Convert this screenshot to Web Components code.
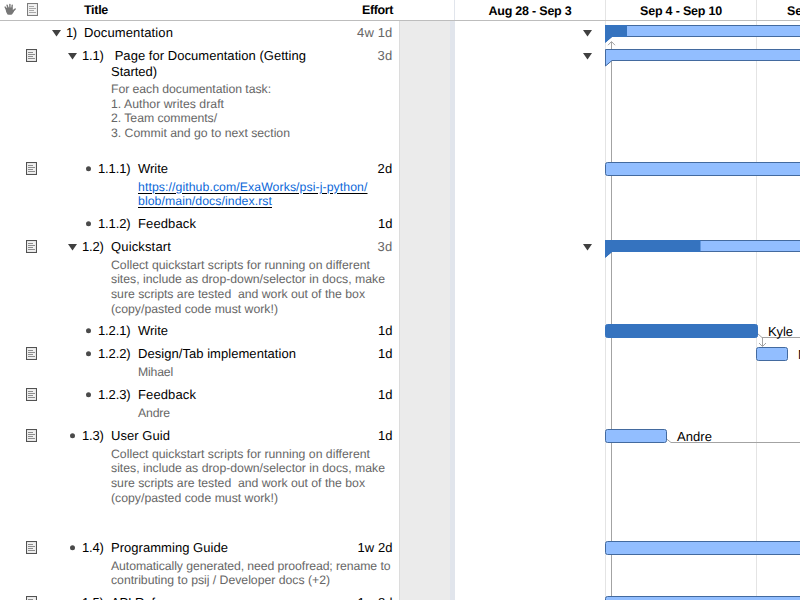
<!DOCTYPE html>
<html lang="en"><head><meta charset="utf-8"><title>Project plan</title>
<style>html,body{margin:0;height:100%;overflow:hidden;background:#fff}</style></head><body>
<plan-app></plan-app>
<script>
const define = (name, css, html, ready) => {
  const t = document.createElement('template');
  t.innerHTML = `<style>${css}</style>${html}`;
  customElements.define(name, class extends HTMLElement {
    connectedCallback() {
      if (this.shadowRoot) return;
      this.attachShadow({mode: 'open'}).append(t.content.cloneNode(true));
      if (ready) ready.call(this, this.shadowRoot);
    }
  });
};

// A single line of text, tracked so that it spans the width given in "w".
define('fit-line', ':host{display:block;white-space:pre;width:max-content}', '<slot></slot>', function () {
  const w = +this.getAttribute('w');
  if (w) {
    const now = this.getBoundingClientRect().width;
    this.style.letterSpacing = (w - now) / this.textContent.length + 'px';
  }
});

define('note-icon', ':host{display:block;width:11px;height:13px}:host([dim]){opacity:.75}svg{display:block}',
 `<svg width="11" height="13"><rect x=".5" y=".5" width="10" height="12" fill="#f0f0f0" stroke="#525252" stroke-width="1.1"/><path d="M2 3.5h5M2 5.5h7M2 7.5h5M2 9.5h7" stroke="#8c8c8c"/></svg>`);

define('hand-icon', ':host{display:block;width:13px;height:13px}svg{display:block}',
 `<svg width="13" height="13" viewBox="0 0 13 13"><path d="M2.2 6 1.1 4M4 5 3.1 2.2M5.9 5V1.4M7.9 5 8.2 2.3M8.6 8.6 11.2 6" fill="none" stroke="#777" stroke-width="1.4" stroke-linecap="round"/><path d="M1.4 5.2 3 4.6 8.7 4.4 8.9 7 10.6 6.3Q10 9.6 8 11.4 6 12.3 3.5 11.4 1.8 9 1.4 5.2Z" fill="#777"/></svg>`);

define('row-marker', ':host{display:block;width:10px;height:9px}svg{display:block}',
 `<svg width="10" height="9"></svg>`, function (r) {
  r.querySelector('svg').innerHTML = this.hasAttribute('leaf')
   ? '<circle cx="4.5" cy="3.8" r="2.5" fill="#4a4a4a"/>'
   : '<path d="M0 1H9L4.5 7.6Z" fill="#404040"/>';
});

define('task-row', `
 :host{display:flex;box-sizing:border-box;padding:4px 6.5px 0 26px;color:#000;font-size:13px;line-height:16px}
 .icon{width:11px;padding-top:1px;flex:none}
 .mark{padding-top:4px;flex:none}
 .num{flex:none}
 .main{flex:1;min-width:0}
 .effort{flex:none;display:flex}
 .notes{padding-top:2.5px;font-size:12.25px;line-height:14.67px;color:#666}
 :host([two]) .notes{padding-top:2px}
 :host([group]) .effort{color:#666}
 :host([link]) .notes{color:#0866d8;text-decoration:underline;text-decoration-color:#000;text-underline-offset:1.5px;text-decoration-thickness:1px}
 ::slotted(fit-line){text-decoration:inherit}`,
 `<div class="icon"></div><div class="mark"></div><div class="num"></div>
  <div class="main"><slot name="title"></slot><div class="notes"><slot></slot></div></div>
  <div class="effort"><slot name="effort"></slot></div>`, function (r) {
  const q = s => r.querySelector(s), d = +this.getAttribute('depth');
  if (this.hasAttribute('note')) q('.icon').innerHTML = '<note-icon></note-icon>';
  q('.mark').innerHTML = this.hasAttribute('leaf') ? '<row-marker leaf></row-marker>' : '<row-marker></row-marker>';
  q('.mark').style.marginLeft = 15 + 16 * d + 'px';
  q('.mark').style.width = '14px';
  q('.num').style.width = [18, 29, 40][d] + 'px';
  q('.num').innerHTML = `<fit-line w="${[10.5, 21.5, 32.5][d]}">${this.getAttribute('num')}</fit-line>`;
});

// A bar of the chart: "x" and "w" give its time span, "done" the finished part.
define('gantt-row', `
 :host{display:block;box-sizing:border-box;overflow:visible}
 .line{display:flex;align-items:flex-start;padding-top:4px}
 row-marker{margin:4px 12px 0 128px}
 svg{display:block;overflow:visible;flex:none}
 .label{margin-left:10px;font-size:13px;line-height:16px;padding-top:1px}`,
 `<div class="line"></div>`, function (r) {
  const a = n => this.getAttribute(n), line = r.querySelector('.line');
  if (!a('w')) return;
  const w = +a('w'), done = +a('done'), x = +a('x') || 150;
  if (this.hasAttribute('group')) {
    const y = +a('dy') || 0;
    line.innerHTML = `<row-marker></row-marker><svg width="${w}" height="20">
     <g transform="translate(0 ${y})"><path d="M.5 .5H${w}V11.5H7L.5 17Z" fill="#92beff" stroke="#436a9f"/>
     ${done ? `<path d="M0 0H${done}V12H7L0 18Z" fill="#3573bf"/>` : ''}</g></svg>`;
  } else {
    line.innerHTML = `<svg style="margin-left:${x}px;margin-top:1px" width="${w}" height="14">
     <rect x=".5" y=".5" width="${w - 1}" height="13" rx="2" fill="${done ? '#3573bf' : '#92beff'}" stroke="${done ? '#3573bf' : '#436a9f'}"/></svg>
     <div class="label">${a('label') ? `<fit-line w="${a('lw')}">${a('label')}</fit-line>` : ''}</div>`;
  }
});

define('plan-outline', `
 :host{display:block;width:399px;flex:none;overflow:hidden}
 header{box-sizing:border-box;height:21px;border-bottom:1px solid #bdbdbd;display:flex;padding:2px 6px 0 4px;font-size:12.5px;line-height:16px;font-weight:bold}
 hand-icon{margin:1px 10px 0 0}note-icon{margin-top:1px}
 .t{margin-left:46px;flex:1}`,
 `<header><hand-icon></hand-icon><note-icon dim></note-icon><div class="t"><fit-line w="24">Title</fit-line></div><fit-line w="31">Effort</fit-line></header><slot></slot>`);

define('plan-chart', `
 :host{display:block;flex:1;min-width:0;height:600px;overflow:hidden;position:relative}
 header{box-sizing:border-box;height:21px;border-bottom:1px solid #bdbdbd;display:grid;grid-template-columns:56px 151px 151px 151px;font-size:12.5px;font-weight:bold;line-height:16px}
 header div{padding-top:3px;display:flex;justify-content:center;border-right:1px solid #e4e4e4}
 header .off{border-color:#e1e5ec}
 .body{display:grid;grid-template-columns:51px 5px 151px 151px 1fr;height:579px}
 .body>*{border-right:1px solid #e4e4e4}
 .body>.off{background:#ebebeb;border-right:0;border-left:1px solid #dcdcdc}
 .body>.now{background:#e1e5ec;border-right:0}
 .rows{position:absolute;left:56px;right:0;top:21px}
 .links{position:absolute;left:0;top:0}`,
 `<header><div class="off"></div><div><fit-line w="83">Aug 28 - Sep 3</fit-line></div><div><fit-line w="82">Sep 4 - Sep 10</fit-line></div><div style="justify-content:flex-start;padding-left:30px"><fit-line w="89">Sep 11 - Sep 17</fit-line></div></header>
  <div class="body"><div class="off"></div><div class="now"></div><div class="wk"></div><div class="wk"></div></div>
  <svg class="links" width="401" height="600" fill="none" stroke="#a3a3a3">
   <path d="M212.5 600V42M209 45.2l3.5-3.7 3.5 3.7"/>
   <path d="M358.5 333.5l4.5 4H401M363.5 337.5V346M360 343l3.5 3.5 3.5-3.5"/>
   <path d="M267 438.5l5 4H401"/></svg>
  <div class="rows"><slot></slot></div>`);

define('plan-app', `
 :host{display:flex;width:800px;height:600px;overflow:hidden;background:#fff;font-family:"Liberation Sans",Arial,sans-serif;color:#000;text-rendering:geometricPrecision}`,
 '<plan-outline></plan-outline><plan-chart></plan-chart>', function (r) {
  const quick = [['Collect quickstart scripts for running on different', 259], ['sites, include as drop-down/selector in docs, make', 274], ['sure scripts are tested  and work out of the box', 254], ['(copy/pasted code must work!)', 167]];
  const rows = [
   {h: 23, d: 0, n: '1)', t: [['Documentation', 89]], e: ['4w 1d', 35.5], group: 1, bar: 'group w="260" done="22"'},
   {h: 113, d: 1, n: '1.1)', t: [[' Page for Documentation (Getting', 195], ['Started)', 46]], e: ['3d', 15], group: 1, note: 1, two: 1, bar: 'group w="260" dy="1"',
    s: [['For each documentation task:', 160], ['1. Author writes draft', 113], ['2. Team comments/', 106], ['3. Commit and go to next section', 179]]},
   {h: 55, d: 2, n: '1.1.1)', t: [['Write', 30]], e: ['2d', 15], note: 1, link: 1, bar: 'w="260"', s: [['https://github.com/ExaWorks/psi-j-python/', 229.5], ['blob/main/docs/index.rst', 134]]},
   {h: 23, d: 2, n: '1.1.2)', t: [['Feedback', 58]], e: ['1d', 14.5]},
   {h: 84, d: 1, n: '1.2)', t: [['Quickstart', 60]], e: ['3d', 15], group: 1, note: 1, s: quick, bar: 'group w="260" done="95.5" dy="1"'},
   {h: 23, d: 2, n: '1.2.1)', t: [['Write', 30]], e: ['1d', 14.5], bar: 'w="153" done="1" label="Kyle" lw="25"'},
   {h: 41, d: 2, n: '1.2.2)', t: [['Design/Tab implementation', 158]], e: ['1d', 14.5], note: 1, s: [['Mihael', 35]], bar: 'x="301" w="32" label="Mihael" lw="40"'},
   {h: 41, d: 2, n: '1.2.3)', t: [['Feedback', 58]], e: ['1d', 14.5], note: 1, s: [['Andre', 32]]},
   {h: 112, d: 1, n: '1.3)', t: [['User Guid', 59]], e: ['1d', 14.5], leaf: 1, note: 1, s: quick, bar: 'w="62" label="Andre" lw="35"'},
   {h: 55, d: 1, n: '1.4)', t: [['Programming Guide', 117]], e: ['1w 2d', 35], leaf: 1, note: 1, s: [['Automatically generated, need proofread; rename to', 279.5], ['contributing to psij / Developer docs (+2)', 219]], bar: 'w="260"'},
   {h: 84, d: 1, n: '1.5)', t: [['API Reference', 83]], e: ['1w 2d', 35], leaf: 1, note: 1, bar: 'w="260"'}
  ];
  r.querySelector('plan-outline').innerHTML = rows.map(o => `<task-row style="height:${o.h}px" depth="${o.d}" num="${o.n}" ${o.group ? 'group' : 'leaf'} ${o.note ? 'note' : ''} ${o.two ? 'two' : ''} ${o.link ? 'link' : ''}>
   ${o.t.map(l => `<fit-line slot="title" w="${l[1]}">${l[0]}</fit-line>`).join('')}<fit-line slot="effort" w="${o.e[1]}">${o.e[0]}</fit-line>${(o.s || []).map(l => `<fit-line w="${l[1]}">${l[0]}</fit-line>`).join('')}</task-row>`).join('');
  r.querySelector('plan-chart').innerHTML = rows.map(o => `<gantt-row style="height:${o.h}px" ${o.bar || ''}></gantt-row>`).join('');
});
</script></body></html>
